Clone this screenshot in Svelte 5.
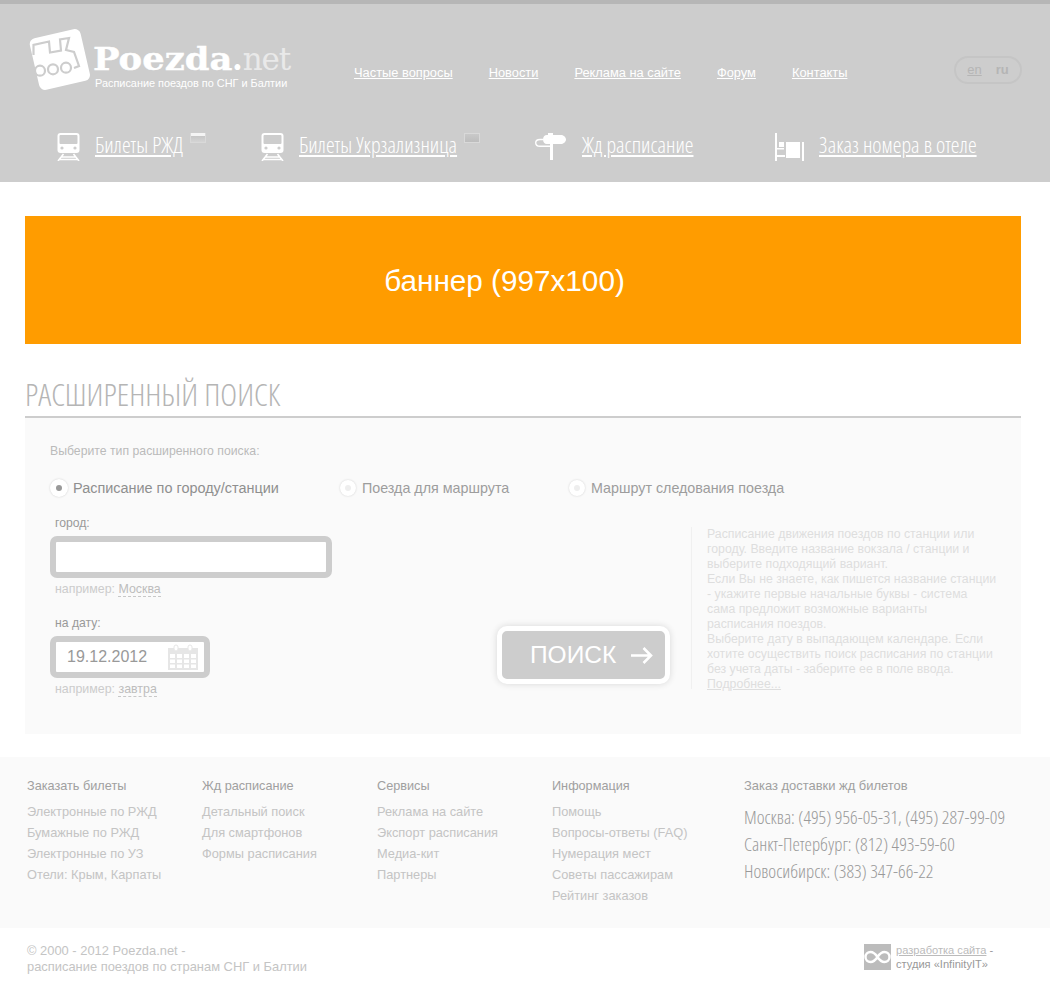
<script>
  const nav = ['Частые вопросы', 'Новости', 'Реклама на сайте', 'Форум', 'Контакты'];
  const radios = ['Расписание по городу/станции', 'Поезда для маршрута', 'Маршрут следования поезда'];
  const cols = [
    { t: 'Заказать билеты', w: 175, l: ['Электронные по РЖД', 'Бумажные по РЖД', 'Электронные по УЗ', 'Отели: Крым, Карпаты'] },
    { t: 'Жд расписание', w: 175, l: ['Детальный поиск', 'Для смартфонов', 'Формы расписания'] },
    { t: 'Сервисы', w: 175, l: ['Реклама на сайте', 'Экспорт расписания', 'Медиа-кит', 'Партнеры'] },
    { t: 'Информация', w: 192, l: ['Помощь', 'Вопросы-ответы (FAQ)', 'Нумерация мест', 'Советы пассажирам', 'Рейтинг заказов'] }
  ];
</script>

{#snippet trainIcon()}
  <svg width="24" height="28" viewBox="0 0 24 28">
    <rect x="0.500" y="0" width="22" height="20" rx="3" fill="#fff"/>
    <rect x="2.500" y="2" width="18" height="9" rx="1" fill="#cdcdcd"/>
    <circle cx="5" cy="15" r="1.600" fill="#cdcdcd"/><circle cx="18" cy="15" r="1.600" fill="#cdcdcd"/>
    <path fill="none" stroke="#fff" stroke-width="1.600" d="M6.500 21L1 28M16.500 21l5.500 7M3.500 24h16M2 26.500h19"/>
  </svg>
{/snippet}

<div class="page">
  <header class="head">
    <div class="top">
      <div class="logo">
        <svg class="logo-ico" width="63" height="64" viewBox="0 0 63 64">
          <rect x="5" y="5" width="52" height="53" rx="6" fill="#fff" transform="rotate(-13 31 32)"/>
          <g fill="none" stroke="#cdcdcd" stroke-width="2.200">
            <path d="M4.500 27V17L20 13.500l1 11 11-2-1-11 9-1.500-3 12 8 2 5 14-5 2"/>
            <circle cx="11" cy="42.700" r="5"/><circle cx="24" cy="41.300" r="5"/><circle cx="37" cy="39.700" r="5"/>
          </g>
        </svg>
        <div class="logo-txt">
          <div class="brand"><b>Poezda</b><em>.</em><span>net</span></div>
          <div class="slogan">Расписание поездов по СНГ и Балтии</div>
        </div>
      </div>
      <nav class="nav">
        {#each nav as n}<a href="#x">{n}</a>{/each}
      </nav>
      <div class="lang"><a href="#x">en</a><b>ru</b></div>
    </div>
    <div class="big">
      <div class="bi b1">
        {@render trainIcon()}
        <a href="#x">Билеты РЖД</a><i class="flag"></i>
      </div>
      <div class="bi b2">
        {@render trainIcon()}
        <a href="#x">Билеты Укрзализница</a><i class="flag ua"></i>
      </div>
      <div class="bi b3">
        <svg width="32" height="28" viewBox="0 0 32 28"><path fill="#fff" d="M13 0h5v2h8c3 0 5 2.500 5 4.500S29 11 26 11h-8v16h-3V11h-3c-2.500 0-4-2-4-4.500S9.500 2 12 2h1z"/><path fill="none" stroke="#fff" stroke-width="1.400" d="M8 6.500H5C2 6.500.7 8 .7 9.800S2 13.300 5 13.300h10"/></svg>
        <a href="#x">Жд расписание</a>
      </div>
      <div class="bi b4">
        <svg width="30" height="28" viewBox="0 0 30 28"><path fill="#fff" d="M0 0h2v28H0zM27 9h2v19h-2zM11 9h14v16H11zM4 9h5v5H4zM2 15h7v1.500H2zM2 22h8v2H2z"/></svg>
        <a href="#x">Заказ номера в отеле</a>
      </div>
    </div>
  </header>

  <main class="main">
    <div class="banner">баннер (997x100)</div>
    <h1 class="title">РАСШИРЕННЫЙ ПОИСК</h1>
    <section class="panel">
      <div class="choose">Выберите тип расширенного поиска:</div>
      <div class="radios">
        {#each radios as r, i}
          <label class="radio" class:on={i === 0}><i></i>{r}</label>
        {/each}
      </div>
      <div class="form">
        <div class="fields">
          <div class="lbl">город:</div>
          <div class="inp wide"></div>
          <div class="hint">например: <span>Москва</span></div>
          <div class="lbl second">на дату:</div>
          <div class="inp date">19.12.2012
            <svg width="30" height="26" viewBox="0 0 30 26">
              <path fill="#e6e6e6" fill-rule="evenodd" d="M0 4h30v22H0zM2 10v4h5v-4zM9 10v4h5v-4zM16 10v4h5v-4zM23 10v4h5v-4zM2 15.500v3.500h5v-3.500zM9 15.500v3.500h5v-3.500zM16 15.500v3.500h5v-3.500zM23 15.500v3.500h5v-3.500zM2 20.500V24h5v-3.500zM9 20.500V24h5v-3.500zM16 20.500V24h5v-3.500zM23 20.500V24h5v-3.500z"/>
              <rect x="6" y="1" width="4" height="6" rx="2" fill="#fff" stroke="#e6e6e6"/><rect x="20" y="1" width="4" height="6" rx="2" fill="#fff" stroke="#e6e6e6"/>
            </svg>
          </div>
          <div class="hint">например: <span>завтра</span></div>
        </div>
        <div class="btn-wrap">
          <button class="btn">ПОИСК
            <svg width="22" height="17" viewBox="0 0 22 17"><path fill="none" stroke="#fff" stroke-width="2.600" d="M0 8.500h20M12.500 1l7.500 7.500-7.500 7.500"/></svg>
          </button>
        </div>
        <div class="help">
          Расписание движения поездов по станции или городу. Введите название вокзала / станции и выберите подходящий вариант.<br>
          Если Вы не знаете, как пишется название станции - укажите первые начальные буквы - система сама предложит возможные варианты расписания поездов.<br>
          Выберите дату в выпадающем календаре. Если хотите осуществить поиск расписания по станции без учета даты - заберите ее в поле ввода.<br>
          <a href="#x">Подробнее...</a>
        </div>
      </div>
    </section>
  </main>

  <section class="foot">
    {#each cols as c}
      <div class="col" style="width:{c.w}px">
        <h4>{c.t}</h4>
        {#each c.l as l}<div class="fl">{l}</div>{/each}
      </div>
    {/each}
    <div class="contact">
      <h4>Заказ доставки жд билетов</h4>
      <p>Москва: (495) 956-05-31, (495) 287-99-09</p>
      <p>Санкт-Петербург: (812) 493-59-60</p>
      <p>Новосибирск: (383) 347-66-22</p>
    </div>
  </section>

  <footer class="bottom">
    <div class="copy">© 2000 - 2012 Poezda.net -<br>расписание поездов по странам СНГ и Балтии</div>
    <div class="dev">
      <svg width="27" height="26" viewBox="0 0 27 26"><rect width="27" height="26" fill="#bcbcbc"/><path fill="none" stroke="#fff" stroke-width="2.400" d="M13.500 13c-2-3-4-5-7-5a5 5 0 0 0 0 10c3 0 5-2 7-5s4-5 7-5a5 5 0 0 1 0 10c-3 0-5-2-7-5z"/></svg>
      <div><a href="#x">разработка сайта</a> -<br>студия «InfinityIT»</div>
    </div>
  </footer>
</div>

<style>
  :global(body) { margin: 0; background: #fff; }
  .page { width: 1050px; height: 995px; overflow: hidden; font-family: "Liberation Sans", Arial, sans-serif; }
  a { color: inherit; }
  .head { height: 178px; border-top: 4px solid #b6b6b6; background: #cdcdcd; color: #fff; }
  .top { display: flex; height: 122px; }
  .logo { display: flex; margin: 24px 0 0 29px; width: 325px; }
  .logo-ico { flex: none; }
  .logo-txt { margin-left: 1px; padding-top: 14px; }
  .brand { font: bold 31px/34px "DejaVu Serif", serif; color: #fff; width: 200px; white-space: nowrap; display: flex; }
  .brand b { display: block; width: 139px; transform: scaleX(1.14); transform-origin: left center; -webkit-text-stroke: 0.4px #fff; }
  .brand em { font-style: normal; }
  .brand span { color: #e9e9e9; font-weight: normal; letter-spacing: -1.200px; }
  .slogan { font-size: 10.900px; line-height: 13px; margin: 1px 0 0 2px; white-space: nowrap; }
  .nav { display: flex; gap: 36px; font-size: 12.850px; line-height: 15px; padding-top: 61px; width: 600px; white-space: nowrap; }
  .lang { position: absolute; left: 954px; top: 56px; width: 64px; height: 24px; border: 2px solid #c5c5c5; border-radius: 14px; display: flex; gap: 14px; justify-content: center; font-size: 13px; line-height: 24px; color: #b5b5b5; }
  .big { display: flex; height: 56px; font-family: "Open Sans", sans-serif; font-weight: 300; font-stretch: 75%; font-size: 22px; }
  .bi { display: flex; align-items: flex-start; white-space: nowrap; position: relative; }
  .bi svg { margin-top: 7px; flex: none; }
  .bi a { line-height: 30px; margin-top: 3px; }
  .b1 { margin-left: 57px; width: 204px; } .b1 a { margin-left: 14px; }
  .b2 { width: 274px; } .b2 a { margin-left: 14px; }
  .b3 { width: 240px; } .b3 a { margin-left: 15px; }
  .b4 a { margin-left: 14px; }
  .flag { width: 16px; height: 10px; margin: 7px 0 0 7px; box-sizing: border-box; border: 1px solid #d9d9d9; border-top: 0; background: linear-gradient(#f4f4f4 0 3px, #c6c6c6 3px, #d4d4d4 100%); }
  .flag.ua { background: linear-gradient(#c9c9c9, #bdbdbd); border: 1px solid #d9d9d9; }
  .main { padding: 34px 29px 0 25px; }
  .banner { height: 128px; background: #ff9c00; color: #fff; font-size: 29.700px; line-height: 129px; text-align: center; padding-right: 37px; }
  .title { margin: 29px 0 0; height: 43px; border-bottom: 2px solid #cdcdcd; font: 300 32px/41px "Open Sans", sans-serif; font-stretch: 75%; color: #b5b5b5; white-space: nowrap; }
  .panel { height: 316px; background: #fafafa; padding: 0 25px; position: relative; }
  .choose { padding-top: 26px; font-size: 12.250px; line-height: 14px; color: #bbb; }
  .radios { display: flex; margin-top: 20px; height: 20px; font-size: 14.300px; line-height: 18px; color: #9d9d9d; }
  .radio { display: flex; align-items: center; gap: 5px; width: 290px; }
  .radio i { width: 18px; height: 18px; flex: none; border-radius: 50%; background: #fff; box-shadow: 0 0 2px #ccc; position: relative; }
  .radio i::after { content: ""; position: absolute; left: 6px; top: 6px; width: 6px; height: 6px; border-radius: 50%; background: #eee; }
  .radio.on { color: #8f8f8f; font-size: 14.450px; }
  .radio.on i::after { background: #999; }
  .radio:nth-child(2) { width: 229px; }
  .radio:nth-child(2) i, .radio:nth-child(3) i { width: 16px; height: 16px; }
  .radio:nth-child(2) i::after, .radio:nth-child(3) i::after { left: 5px; top: 5px; }
  .radio:nth-child(2), .radio:nth-child(3) { gap: 6px; }
  .form { display: flex; margin-top: 18px; }
  .fields { width: 447px; flex: none; }
  .lbl { font-size: 12.200px; line-height: 14px; color: #999; margin-left: 5px; }
  .second { margin-top: 20px; }
  .inp { box-sizing: border-box; height: 42px; margin-top: 6px; background: #fff; border: 6px solid #cdcdcd; border-radius: 7px; }
  .wide { width: 282px; }
  .date { width: 160px; display: flex; align-items: center; justify-content: space-between; padding: 0 6px 0 11px; font-size: 16px; color: #999; }
  .hint { font-size: 12.400px; line-height: 14px; color: #ccc; margin: 4px 0 0 5px; }
  .hint span { border-bottom: 1px dashed #c8c8c8; color: #bdbdbd; }
  .btn-wrap { width: 194px; flex: none; padding-top: 110px; }
  .btn { box-sizing: border-box; width: 173px; height: 58px; display: flex; align-items: center; gap: 15px; padding: 0 0 0 28px; background: #cdcdcd; border: 5px solid #fff; border-radius: 10px; box-shadow: 0 0 7px rgba(0,0,0,.14); color: #fff; font: 24.500px "Liberation Sans", sans-serif; }
  .help { flex: none; margin-top: 11px; height: 162px; width: 290px; padding-left: 15px; border-left: 1px solid #f0f0f0; font-size: 12.300px; line-height: 15px; color: #dedede; }
  .foot { margin-top: 23px; height: 171px; background: #fafafa; display: flex; padding-left: 27px; color: #c4c4c4; }
  h4 { margin: 21px 0 7px; font-size: 12.700px; font-weight: normal; line-height: 16px; color: #a0a0a0; }
  .fl { font-size: 12.800px; line-height: 21px; white-space: nowrap; }
  .contact { flex: none; }
  .contact p { margin: 0; font: 300 18.700px/27px "Open Sans", sans-serif; font-stretch: 75%; color: #999; white-space: nowrap; }
  .contact h4 { margin-bottom: 9px; font-size: 12.950px; }
  .bottom { display: flex; justify-content: space-between; padding: 15px 0 0 27px; font-size: 12.900px; line-height: 16px; color: #c4c4c4; }
  .dev { display: flex; gap: 5px; width: 186px; font-size: 11.100px; line-height: 14px; color: #999; }
  .dev svg { flex: none; margin-top: 1px; }
  .dev a { color: #bbb; }
</style>
